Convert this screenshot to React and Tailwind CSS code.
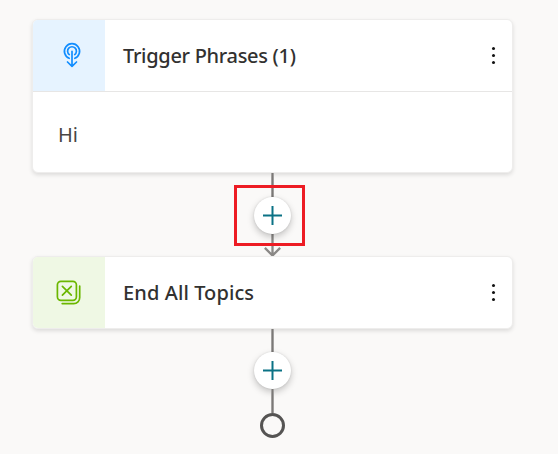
function TriggerIcon() {
  return (
    <svg width="20" height="28" viewBox="0 0 20 28" fill="none" stroke="#118dff" strokeWidth="1.7" strokeLinecap="round" strokeLinejoin="round">
      <path d="M7.2 16.3A7.6 7.6 0 1 1 12.8 16.3" />
      <path d="M7.3 12.6A4.4 4.4 0 1 1 12.7 12.6" />
      <path d="M10 9.3V24.3M5.5 20L10 24.3L14.5 20" />
    </svg>
  );
}

function EndIcon() {
  return (
    <svg width="26" height="26" viewBox="0 0 26 26" fill="none" stroke="#6bb700" strokeWidth="1.7" strokeLinecap="round" strokeLinejoin="round">
      <rect x="1.4" y="1.3" width="19" height="19" rx="3.5" />
      <path d="M6.4 6.3L15.3 15.2M15.3 6.3L6.4 15.2" />
      <path d="M23.7 6V17.5A6 6 0 0 1 17.7 23.6H6.2" />
    </svg>
  );
}

function MoreButton() {
  return (
    <button aria-label="More" className="mr-[17.5px] flex h-5 w-[3px] flex-col items-center justify-center gap-1">
      <span className="size-[3px] shrink-0 rounded-full bg-[#111111]" />
      <span className="size-[3px] shrink-0 rounded-full bg-[#111111]" />
      <span className="size-[3px] shrink-0 rounded-full bg-[#111111]" />
    </button>
  );
}

function AddButton() {
  return (
    <button aria-label="Add node" className="flex size-[37px] shrink-0 items-center justify-center rounded-full bg-white shadow-[0_3px_7px_rgba(0,0,0,0.22),0_0_2px_rgba(0,0,0,0.12)]">
      <svg width="19" height="19" viewBox="0 0 19 19" stroke="#0b7285" strokeWidth="2">
        <path d="M9.5 0V19M0 9.5H19" />
      </svg>
    </button>
  );
}

function Connector({ height = "h-[23px]" }) {
  return <div className={`${height} w-[3px] shrink-0 border-x border-[#a3a1a0] bg-[#7b7977]`} />;
}

function Card({ icon, tint, title, children }) {
  return (
    <section className="w-[481px] shrink-0 overflow-hidden rounded-md border border-[#eeedec] bg-white shadow-[0_2px_4px_rgba(0,0,0,0.12)]">
      <header className="flex h-[71px] items-center">
        <div className={`flex h-full w-[72px] shrink-0 items-center justify-center ${tint}`}>{icon}</div>
        <h2 className="ml-[18px] flex-1 whitespace-nowrap text-[20px] font-medium leading-7 text-[#323130]">{title}</h2>
        <MoreButton />
      </header>
      {children}
    </section>
  );
}

export default function App() {
  return (
    <main className="flex h-[454px] w-[558px] flex-col overflow-hidden bg-[#faf9f8] pl-8 pt-[19px] font-['Noto_Sans','Open_Sans',sans-serif]">
      <Card
        tint="bg-[#e6f3ff]"
        icon={<div className="ml-1.5"><TriggerIcon /></div>}
        title={<span className="tracking-[-0.3px]">Trigger Phrases (1)</span>}
      >
        <div className="flex h-[81px] items-center border-t border-[#e7e6e5] pl-[25px] pt-1.5 text-[20px] font-normal text-[#484644]">Hi</div>
      </Card>
      <div className="flex h-[83px] w-[481px] shrink-0 flex-col items-center">
        <Connector height="h-6" />
        <div className="relative flex flex-col items-center">
          <AddButton />
          <div className="pointer-events-none absolute -left-[20px] -top-[12px] h-[61px] w-[71px] border-[3px] border-[#ed1c24]" />
        </div>
        <svg width="21" height="23" viewBox="0 0 21 23" fill="none" stroke="#8a8886" strokeWidth="2.4">
          <path d="M10.5 0V22.5M2.5 14.5L10.5 22.5L18.5 14.5" />
        </svg>
      </div>
      <Card
        tint="bg-[#eff8e4]"
        icon={<EndIcon />}
        title={<span className="tracking-[0.1px]">End All Topics</span>}
      />
      <div className="flex w-[481px] shrink-0 flex-col items-center">
        <Connector />
        <AddButton />
        <Connector height="h-6" />
        <div className="size-[25px] shrink-0 rounded-full border-[3px] border-[#555453]" />
      </div>
    </main>
  );
}
